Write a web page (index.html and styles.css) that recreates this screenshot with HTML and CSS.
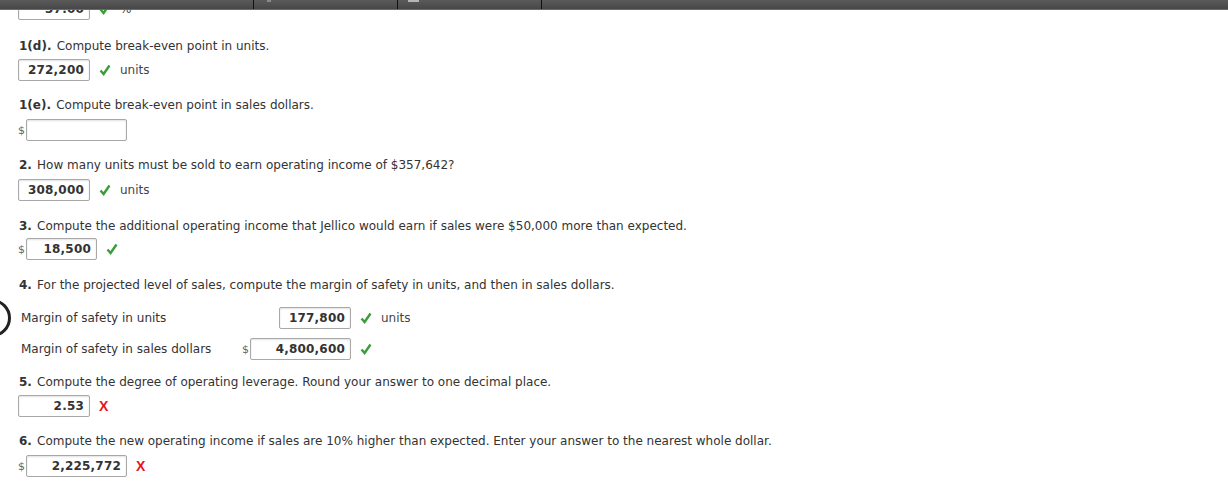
FILE: index.html
```html
<!DOCTYPE html>
<html>
<head>
<meta charset="utf-8">
<link rel="stylesheet" href="styles.css">
</head>
<body>
<div class="topbar">
  <div class="tb-seg tb-a"></div>
  <div class="tb-seg tb-b"><span class="tb-arrow"></span></div>
  <div class="tb-seg tb-c"><span class="tb-mark"></span></div>
  <div class="tb-seg tb-d"></div>
</div>
<span class="ring"></span>

<main class="page">
  <div class="row first">
    <span class="box w72">37.00</span>
    <svg class="ok" viewBox="0 0 12 12"><path d="M1.5 6.5 L4.6 10 L10.5 1.5" /></svg>
    <span class="unit">%</span>
  </div>

  <p class="q q-first">1(d). <span class="qt">Compute break-even point in units.</span></p>
  <div class="row r5">
    <span class="box w72">272,200</span>
    <svg class="ok" viewBox="0 0 12 12"><path d="M1.5 6.5 L4.6 10 L10.5 1.5" /></svg>
    <span class="unit">units</span>
  </div>

  <p class="q q-e">1(e). <span class="qt">Compute break-even point in sales dollars.</span></p>
  <div class="row">
    <span class="cur">$</span><span class="box w101"></span>
  </div>

  <p class="q">2. <span class="qt">How many units must be sold to earn operating income of $357,642?</span></p>
  <div class="row">
    <span class="box w72">308,000</span>
    <svg class="ok" viewBox="0 0 12 12"><path d="M1.5 6.5 L4.6 10 L10.5 1.5" /></svg>
    <span class="unit">units</span>
  </div>

  <p class="q q-wide">3. <span class="qt">Compute the additional operating income that Jellico would earn if sales were $50,000 more than expected.</span></p>
  <div class="row r4">
    <span class="cur">$</span><span class="box w71">18,500</span>
    <svg class="ok" viewBox="0 0 12 12"><path d="M1.5 6.5 L4.6 10 L10.5 1.5" /></svg>
  </div>

  <p class="q q-wide">4. <span class="qt">For the projected level of sales, compute the margin of safety in units, and then in sales dollars.</span></p>
  <div class="grid">
    <span class="lbl">Margin of safety in units</span>
    <span class="cur"></span>
    <span class="box w72 end">177,800</span>
    <svg class="ok" viewBox="0 0 12 12"><path d="M1.5 6.5 L4.6 10 L10.5 1.5" /></svg>
    <span class="unit">units</span>

    <span class="lbl">Margin of safety in sales dollars</span>
    <span class="cur">$</span>
    <span class="box w101">4,800,600</span>
    <svg class="ok" viewBox="0 0 12 12"><path d="M1.5 6.5 L4.6 10 L10.5 1.5" /></svg>
    <span class="unit"></span>
  </div>

  <p class="q q-narrow">5. <span class="qt">Compute the degree of operating leverage. Round your answer to one decimal place.</span></p>
  <div class="row r5">
    <span class="box w72">2.53</span>
    <span class="bad">X</span>
  </div>

  <p class="q">6. <span class="qt">Compute the new operating income if sales are 10% higher than expected. Enter your answer to the nearest whole dollar.</span></p>
  <div class="row">
    <span class="cur">$</span><span class="box w101">2,225,772</span>
    <span class="bad">X</span>
  </div>
</main>
</body>
</html>
```

FILE: styles.css
```css
html, body {
  margin: 0;
  padding: 0;
  background: #ffffff;
}

body {
  font-family: "DejaVu Sans", Verdana, sans-serif;
  font-size: 12px;
  color: #333333;
  overflow: hidden;
}

.topbar {
  position: absolute;
  left: 0;
  top: 0;
  width: 1228px;
  height: 9px;
  display: flex;
  background: linear-gradient(#5a5a5a, #474747);
  border-bottom: 1px solid #6a6a6a;
  z-index: 5;
}

.tb-seg {
  position: relative;
  height: 9px;
  border-right: 1px solid #111;
}

.tb-a { width: 253px; }
.tb-b { width: 143px; }
.tb-c { width: 143px; }
.tb-d { flex: 1; border-right: none; }

.tb-arrow {
  position: absolute;
  left: 13px;
  top: 0;
  width: 4px;
  height: 2px;
  background: #8a8a8a;
}

.tb-mark {
  position: absolute;
  left: 10px;
  top: 0;
  width: 11px;
  height: 2px;
  background: #b5b5b5;
}

.ring {
  position: absolute;
  left: -27px;
  top: 299px;
  width: 32px;
  height: 32px;
  border: 3px solid #222;
  border-radius: 50%;
}

.page {
  padding-left: 18px;
}

.row {
  display: flex;
  align-items: center;
  height: 22px;
  margin-top: 6px;
}

.row.first { margin-top: -2px; }
.row.r5 { margin-top: 5px; }
.row.r4 { margin-top: 4px; }

.q {
  margin: 16px 0 0 1px;
  height: 16px;
  line-height: 16px;
  font-weight: bold;
  color: #333;
  white-space: nowrap;
}

.q.q-first { margin-top: 18px; }
.q.q-e { margin-top: 16px; }
.q.q-wide { margin-top: 17px; }
.q.q-narrow { margin-top: 14px; }

.q .qt {
  font-weight: normal;
  margin-left: 1px;
}

.box {
  box-sizing: border-box;
  height: 22px;
  line-height: 20px;
  border: 1px solid #a8a8a8;
  border-radius: 2px;
  box-shadow: inset 0 1px 2px rgba(0, 0, 0, 0.12);
  background: #fff;
  text-align: right;
  padding-right: 5px;
  font-weight: bold;
  color: #333;
  font-size: 12px;
  letter-spacing: 0.2px;
}

.w72 { width: 72px; }
.w71 { width: 71px; }
.w101 { width: 101px; }

.cur {
  width: 8px;
  color: #666;
  font-size: 11px;
}

.ok {
  width: 12px;
  height: 12px;
  margin-left: 9px;
  fill: none;
  stroke: #3a9d3a;
  stroke-width: 2.4;
  stroke-linecap: butt;
  stroke-linejoin: miter;
}

.unit {
  margin-left: 9px;
  color: #444;
}

.bad {
  margin-left: 9px;
  font-family: "Liberation Sans", Arial, sans-serif;
  font-weight: bold;
  font-size: 14px;
  color: #e8141c;
}

.grid {
  display: grid;
  grid-template-columns: 221px 8px 101px auto auto;
  grid-auto-rows: 22px;
  justify-content: start;
  row-gap: 9px;
  align-items: center;
  margin: 14px 0 0 3px;
}

.grid .end {
  justify-self: end;
}

.grid .lbl {
  color: #333;
}
```
